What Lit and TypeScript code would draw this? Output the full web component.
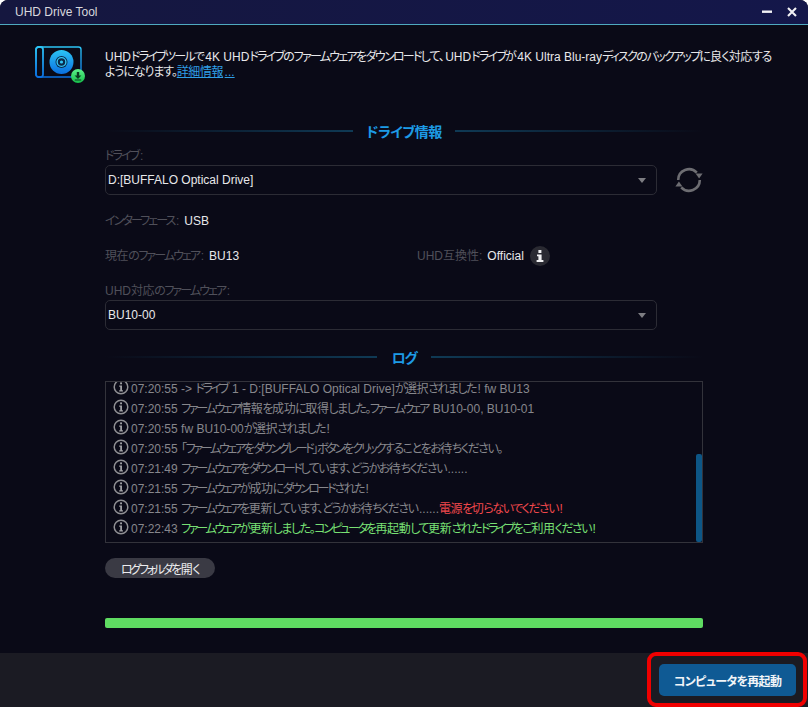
import { LitElement, html, css } from "lit";
import { customElement } from "lit/decorators.js";
import { classMap } from "lit/directives/class-map.js";

/* The reference's Japanese face is much narrower than Noto: tighten each script by its own amount,
   and give the last glyph of a run back its room when Latin text follows it. */
const jp = (s: string) => {
  const runs = s.match(/[\u30A0-\u30FF]+|[\u3000-\u309F]+|[\u4E00-\u9FFF]+|[^\u3000-\u30FF\u4E00-\u9FFF]+/g) ?? [];
  const kind = (r: string) => {
    const c = r.charCodeAt(0);
    if (c >= 0x30a0 && c <= 0x30ff) return "ka";
    if (c >= 0x3000 && c <= 0x309f) return "hi";
    if (c >= 0x4e00 && c <= 0x9fff) return "kj";
    return "";
  };
  return runs.map((run, i) => {
    const k = kind(run);
    if (!k) return run;
    const next = runs[i + 1];
    const end = next !== undefined && kind(next) === "";
    return html`<span class=${classMap({ [k]: true, end })}>${run}</span>`;
  });
};

const infoIcon = html`<svg class="li" viewBox="0 0 16 16" width="16" height="16"><circle cx="8" cy="8" r="6.8" fill="none" stroke="#8f8f93" stroke-width="1.5"/><rect x="7.1" y="3.4" width="1.9" height="1.9" fill="#a0a0a4"/><path d="M6.2 6.6H9V11.3H10V12.5H6.2V11.3H7.2V7.8H6.2Z" fill="#a0a0a4"/></svg>`;

const arrow = html`<svg class="arrow" width="8" height="5" viewBox="0 0 8 5"><path d="M0 0H8L4 5Z" fill="#7d7d82"/></svg>`;

type Seg = { t: string; c?: string };
const logs: { time: string; segs: Seg[] }[] = [
  { time: "07:20:55", segs: [{ t: " -> ドライブ 1 - D:[BUFFALO Optical Drive]が選択されました! fw BU13" }] },
  { time: "07:20:55", segs: [{ t: " ファームウェア情報を成功に取得しました。ファームウェア BU10-00, BU10-01" }] },
  { time: "07:20:55", segs: [{ t: " fw BU10-00が選択されました!" }] },
  { time: "07:20:55", segs: [{ t: " 「ファームウェアをダウングレード」ボタンをクリックすることをお待ちください。" }] },
  { time: "07:21:49", segs: [{ t: " ファームウェアをダウンロードしています、どうかお待ちください......" }] },
  { time: "07:21:55", segs: [{ t: " ファームウェアが成功にダウンロードされた!" }] },
  { time: "07:21:55", segs: [{ t: " ファームウェアを更新しています、どうかお待ちください......" }, { t: "電源を切らないでください!", c: "red" }] },
  { time: "07:22:43", segs: [{ t: " ファームウェアが更新しました。コンピュータを再起動して更新されたドライブをご利用ください!", c: "green" }] },
];

@customElement("app-root")
export class AppRoot extends LitElement {
  static styles = css`
    :host {
      display: block;
      width: 808px;
      height: 707px;
      overflow: hidden;
      background: #fff;
      font-family: "Liberation Sans", "Noto Sans CJK JP", sans-serif;
      font-size: 12px;
      font-feature-settings: "palt";
      color: #e6e6e8;
    }
    .ka { letter-spacing: -2.3px; }
    .hi { letter-spacing: -1.5px; }
    .kj { letter-spacing: -0.4px; }
    .end { padding-right: 1.5px; }
    .intro .ka { letter-spacing: -1.75px; }
    .intro .hi { letter-spacing: -1.1px; }
    .label .ka { letter-spacing: -1.9px; }
    .window {
      height: 707px;
      display: flex;
      flex-direction: column;
      background: #0a0a17;
      border-radius: 8px 8px 0 0;
      overflow: hidden;
    }
    .titlebar {
      height: 24px;
      flex: none;
      display: flex;
      align-items: center;
      justify-content: space-between;
      padding: 0 11px 0 15px;
      background: linear-gradient(90deg, #15173f, #14174a);
      border-bottom: 1px solid #4fa9c0;
      font-size: 12px;
      color: #d8d8dc;
    }
    .winbtns { display: flex; align-items: center; gap: 15px; }
    .winbtns svg { display: block; }
    .main { flex: 1; padding: 0 105px; display: flex; flex-direction: column; position: relative; }
    .intro {
      margin-top: 25px;
      height: 30px;
      display: flex;
      margin-left: -70px;
      gap: 20px;
      line-height: 15px;
    }
    .intro .logo { flex: none; width: 50px; height: 40px; margin-top: -4px; }
    .intro p { margin: 0; white-space: nowrap; color: #e8e8ea; }
    .intro a { color: #2f9fe6; text-decoration: underline; }
    .heading {
      display: flex;
      align-items: center;
      height: 16px;
      color: #1d9be6;
      font-size: 14px;
      font-weight: 700;
      white-space: nowrap;
    }
    .heading i { flex: 1; height: 2px; }
    .heading i.l { background: linear-gradient(90deg, #0a0a17, #0f3a55); }
    .heading i.r { background: linear-gradient(90deg, #0f3a55, #0a0a17); }
    .h1 { margin-top: 43px; gap: 13px; letter-spacing: -0.5px; }
    .h2 { margin-top: 19px; gap: 15px; letter-spacing: -1.5px; }
    .label { color: #50505a; line-height: 14px; }
    .drive-label { margin-top: 11px; height: 12px; line-height: 12px; }
    .select-row { display: flex; align-items: center; flex: none; }
    .select {
      width: 552px;
      height: 30px;
      box-sizing: border-box;
      border: 1px solid #2c2c35;
      border-radius: 5px;
      display: flex;
      align-items: center;
      justify-content: space-between;
      padding: 0 10px 0 2px;
      color: #e8e8ea;
      font-size: 12px;
    }
    .drive-sel { margin-top: 3px; }
    .refresh { margin-left: 18px; display: block; }
    .field { display: flex; align-items: center; gap: 5px; height: 14px; }
    .field .v { color: #e8e8ea; }
    .iface { margin-top: 19px; }
    .fwrow { margin-top: 21px; display: flex; align-items: center; height: 14px; }
    .fwrow .field:first-child { width: 312px; }
    .badge {
      width: 20px; height: 20px; border-radius: 50%;
      background: #2a2a32; display: flex; align-items: center; justify-content: center;
      margin-left: 1px;
    }
    .uhd-label { margin-top: 22px; height: 12px; line-height: 12px; }
    .uhd-sel { margin-top: 3px; }
    .logbox {
      margin-top: 16px;
      height: 162px;
      box-sizing: border-box;
      border: 1px solid #33333b;
      overflow: hidden;
      position: relative;
      flex: none;
    }
    .loglist { margin-top: -5px; padding-left: 7px; }
    .row { height: 20px; display: flex; align-items: center; gap: 2px; white-space: pre; color: #87878c; }
    .li { flex: none; display: block; }
    .row .red { color: #f0484c; }
    .row .green { color: #78e074; }
    .thumb {
      position: absolute; right: 0; top: 72px; bottom: 0; width: 6px;
      background: #0d5686; border-radius: 2px;
    }
    .logbtn {
      margin-top: 15px;
      width: 110px; height: 20px;
      border-radius: 10px;
      background: #3a3a44;
      color: #ececee;
      display: flex; align-items: center; justify-content: center;
      font-size: 12px;
      flex: none;
    }
    .progress {
      margin-top: 40px;
      height: 10px;
      border-radius: 2px;
      background: #5fdc62;
      flex: none;
    }
    .footer {
      height: 54px;
      flex: none;
      background: #1b1b23;
      display: flex;
      align-items: center;
      justify-content: flex-end;
      padding-right: 12px;
      position: relative;
    }
    .restart {
      width: 137px; height: 32px;
      border-radius: 5px;
      background: #0f5a94;
      color: #f2f5f8;
      font-weight: 700;
      font-size: 12px;
      letter-spacing: -0.7px;
      display: flex; align-items: center; justify-content: center;
    }
    .callout {
      position: absolute;
      left: 647px; top: 652px; width: 160px; height: 55px;
      box-sizing: border-box;
      border: 4px solid #f00000;
      border-radius: 9px;
    }
  `;

  render() {
    return html`
      <div class="window">
        <div class="titlebar">
          <span>UHD Drive Tool</span>
          <span class="winbtns">
            <svg width="10" height="10" viewBox="0 0 10 10"><rect x="0" y="3.5" width="10" height="2.4" fill="#f2f2f4"/></svg>
            <svg width="10" height="10" viewBox="0 0 10 10"><path d="M1 1L9 9M9 1L1 9" stroke="#f2f2f4" stroke-width="2.1"/></svg>
          </span>
        </div>
        <div class="main">
          <div class="intro">
            <svg class="logo" viewBox="0 0 50 40">
              <defs>
                <linearGradient id="lg" x1="0" y1="0" x2="0" y2="1"><stop offset="0" stop-color="#2cc4f4"/><stop offset="1" stop-color="#0a6fe0"/></linearGradient>
                <linearGradient id="gg" x1="0" y1="0" x2="0" y2="1"><stop offset="0" stop-color="#5df08a"/><stop offset="1" stop-color="#16c04a"/></linearGradient>
              </defs>
              <rect x="1" y="1" width="45" height="30" rx="2.5" fill="none" stroke="url(#lg)" stroke-width="1.4"/>
              <rect x="1" y="1" width="7" height="30" rx="2.5" fill="none" stroke="url(#lg)" stroke-width="1.8"/>
              <rect x="3.5" y="3.5" width="2.6" height="25" fill="#0a0a17"/>
              <circle cx="26.5" cy="16" r="12" fill="url(#lg)"/>
              <circle cx="26.5" cy="16" r="6" fill="#0a2a4a"/>
              <circle cx="26.5" cy="16" r="4.4" fill="none" stroke="#35c6f4" stroke-width="1.4"/>
              <circle cx="26.5" cy="16" r="1.6" fill="#35c6f4"/>
              <circle cx="43" cy="30" r="7" fill="url(#gg)"/>
              <path d="M41.8 26H44.2V29.5H46.4L43 32.9L39.6 29.5H41.8Z M39.8 33.4H46.2V34.6H39.8Z" fill="#0a3a20"/>
            </svg>
            <p>${jp("UHDドライブツールで4K UHDドライブのファームウェアをダウンロードして、UHDドライブが4K Ultra Blu-rayディスクのバックアップに良く対応する")}<br />${jp("ようになります。")}<a>${jp("詳細情報...")}</a></p>
          </div>
          <div class="heading h1"><i class="l"></i><span>ドライブ情報</span><i class="r"></i></div>
          <div class="label drive-label">${jp("ドライブ:")}</div>
          <div class="select-row drive-sel">
            <div class="select"><span>D:[BUFFALO Optical Drive]</span>${arrow}</div>
            <svg class="refresh" width="28" height="28" viewBox="0 0 28 28" fill="none">
              <path d="M3.2 14a10.8 10.8 0 0 1 18.6-7.4" stroke="#6d6d72" stroke-width="2.6"/>
              <path d="M24.8 14a10.8 10.8 0 0 1-18.6 7.4" stroke="#6d6d72" stroke-width="2.6"/>
              <path d="M20.6 12.4H27.6L24.1 7.6Z" transform="rotate(180 24.1 10)" fill="#6d6d72"/>
              <path d="M0.4 15.6H7.4L3.9 20.4Z" transform="rotate(180 3.9 18)" fill="#6d6d72"/>
            </svg>
          </div>
          <div class="field iface"><span class="label">${jp("インターフェース:")}</span><span class="v">USB</span></div>
          <div class="fwrow">
            <div class="field"><span class="label">${jp("現在のファームウェア:")}</span><span class="v">BU13</span></div>
            <div class="field">
              <span class="label">UHD互換性:</span><span class="v">Official</span>
              <span class="badge"><svg width="10" height="12" viewBox="0 0 10 12"><rect x="3.4" y="0" width="3" height="3" fill="#f0f0f2"/><path d="M2 4.4H6.6V10H8.4V12H1.6V10H3.4V6.2H2Z" fill="#f0f0f2"/></svg></span>
            </div>
          </div>
          <div class="label uhd-label">${jp("UHD対応のファームウェア:")}</div>
          <div class="select-row uhd-sel">
            <div class="select"><span>BU10-00</span>${arrow}</div>
          </div>
          <div class="heading h2"><i class="l"></i><span>ログ</span><i class="r"></i></div>
          <div class="logbox">
            <div class="loglist">
              ${logs.map(
                (l) => html`<div class="row">${infoIcon}<span>${l.time}${l.segs.map(
                  (s) => html`<span class=${s.c ?? ""}>${jp(s.t)}</span>`
                )}</span></div>`
              )}
            </div>
            <div class="thumb"></div>
          </div>
          <div class="logbtn"><span>${jp("ログフォルダを開く")}</span></div>
          <div class="progress"></div>
        </div>
        <div class="footer"><div class="restart">コンピュータを再起動</div></div>
      </div>
      <div class="callout"></div>
    `;
  }
}
